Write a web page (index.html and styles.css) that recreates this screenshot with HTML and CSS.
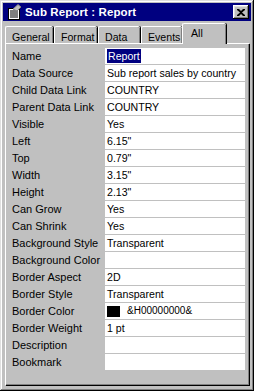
FILE: index.html
```html
<!DOCTYPE html>
<html lang="en">
<head>
    <meta charset="UTF-8">
    <title>Sub Report : Report</title>
    <link rel="stylesheet" href="styles.css">
</head>
<body>
    <div class="window">
        <div class="titlebar">
            <svg class="title-icon" width="16" height="16" viewBox="0 0 16 16">
                <rect x="2.5" y="4.5" width="11" height="11" fill="#fff" stroke="#000"/>
                <path d="M4 7h8M4 9h8M4 11h8M4 13h8" stroke="#000"/>
                <path d="M7 5 L12 0.5 L15 3 L11 7 Z" fill="#c0c0c0" stroke="#808080"/>
            </svg>
            <span class="title-text">Sub Report : Report</span>
            <div class="close-btn">
                <svg width="8" height="7" viewBox="0 0 8 7">
                    <path d="M0 0h2l2 2 2-2h2v1L5 3.5 8 6v1H6L4 5 2 7H0V6l3-2.5L0 1z" fill="#000"/>
                </svg>
            </div>
        </div>

        <div class="tabs">
            <div class="tab tab-general">General</div>
            <div class="tab tab-format">Format</div>
            <div class="tab tab-data">Data</div>
            <div class="tab tab-events">Events</div>
            <div class="tab tab-all active">All</div>
        </div>

        <div class="panel">
            <div class="grid">
                <div class="row"><div class="label">Name</div><div class="value"><span class="selected">Report</span></div></div>
                <div class="row"><div class="label">Data Source</div><div class="value">Sub report sales by country</div></div>
                <div class="row"><div class="label">Child Data Link</div><div class="value">COUNTRY</div></div>
                <div class="row"><div class="label">Parent Data Link</div><div class="value">COUNTRY</div></div>
                <div class="row"><div class="label">Visible</div><div class="value">Yes</div></div>
                <div class="row"><div class="label">Left</div><div class="value">6.15"</div></div>
                <div class="row"><div class="label">Top</div><div class="value">0.79"</div></div>
                <div class="row"><div class="label">Width</div><div class="value">3.15"</div></div>
                <div class="row"><div class="label">Height</div><div class="value">2.13"</div></div>
                <div class="row"><div class="label">Can Grow</div><div class="value">Yes</div></div>
                <div class="row"><div class="label">Can Shrink</div><div class="value">Yes</div></div>
                <div class="row"><div class="label">Background Style</div><div class="value">Transparent</div></div>
                <div class="row"><div class="label">Background Color</div><div class="value"></div></div>
                <div class="row"><div class="label">Border Aspect</div><div class="value">2D</div></div>
                <div class="row"><div class="label">Border Style</div><div class="value">Transparent</div></div>
                <div class="row"><div class="label">Border Color</div><div class="value"><span class="swatch"></span><span class="hex">&amp;H00000000&amp;</span></div></div>
                <div class="row"><div class="label">Border Weight</div><div class="value">1 pt</div></div>
                <div class="row"><div class="label">Description</div><div class="value"></div></div>
                <div class="row"><div class="label">Bookmark</div><div class="value"></div></div>
            </div>
        </div>
    </div>
</body>
</html>
```

FILE: styles.css
```css
body {
    margin: 0;
    background: #c0c0c0;
    font-family: "Liberation Sans", Arial, sans-serif;
    font-size: 11px;
    color: #000;
}
.window {
    width: 254px;
    height: 391px;
    box-sizing: border-box;
    padding: 3px;
    background: #c0c0c0;
    box-shadow: inset -1px -1px #000, inset 1px 1px #dfdfdf,
                inset -2px -2px #808080, inset 2px 2px #fff;
    display: flex;
    flex-direction: column;
}
.titlebar {
    height: 18px;
    background: #000080;
    display: flex;
    align-items: center;
    padding: 0 2px 0 3px;
    color: #fff;
}
.title-icon {
    flex: none;
}
.title-text {
    flex: 1;
    margin-left: 3px;
    font-weight: bold;
    font-size: 11.5px;
    letter-spacing: 0.1px;
}
.close-btn {
    width: 16px;
    height: 14px;
    box-sizing: border-box;
    background: #c0c0c0;
    box-shadow: inset -1px -1px #000, inset 1px 1px #fff,
                inset -2px -2px #808080, inset 2px 2px #dfdfdf;
    display: flex;
    align-items: center;
    justify-content: center;
}
.tabs {
    display: flex;
    align-items: flex-end;
    height: 22px;
    padding-left: 2px;
    position: relative;
    z-index: 1;
}
.tab {
    height: 17px;
    box-sizing: border-box;
    padding: 4px 0 0 6px;
    border-top: 1px solid #fff;
    border-left: 1px solid #fff;
    border-radius: 2px 2px 0 0;
    box-shadow: inset -1px 0 #808080, 1px 0 #000;
    background: #c0c0c0;
    font-size: 10.6px;
    margin-right: 1px;
    white-space: nowrap;
    overflow: hidden;
}
.tab-general { width: 48px; }
.tab-format { width: 43px; }
.tab-data { width: 42px; }
.tab-events { width: 41px; }
.tab-all {
    width: 44px;
    height: 21px;
    padding-top: 3px;
    margin-bottom: -1px;
    margin-left: -1px;
    padding-left: 8px;
}
.panel {
    flex: 1;
    margin: 0 2px 3px 2px;
    border-top: 1px solid #fff;
    border-left: 1px solid #fff;
    box-shadow: inset -1px -1px #808080, 1px 1px #000;
    padding: 4px 4px 0 4px;
}
.grid {
    display: flex;
    flex-direction: column;
    gap: 1px;
}
.row {
    display: flex;
    height: 16px;
}
.label {
    width: 93px;
    padding-left: 2px;
    line-height: 16px;
    white-space: nowrap;
}
.value {
    flex: 1;
    background: #fff;
    padding-left: 2px;
    line-height: 16px;
    font-size: 10.6px;
    white-space: nowrap;
    display: flex;
    align-items: center;
}
.selected {
    background: #000080;
    color: #fff;
    line-height: 14px;
    padding: 0 1px;
}
.swatch {
    width: 13px;
    height: 11px;
    background: #000;
    margin-right: 7px;
}
.hex {
    font-size: 10px;
}
```
